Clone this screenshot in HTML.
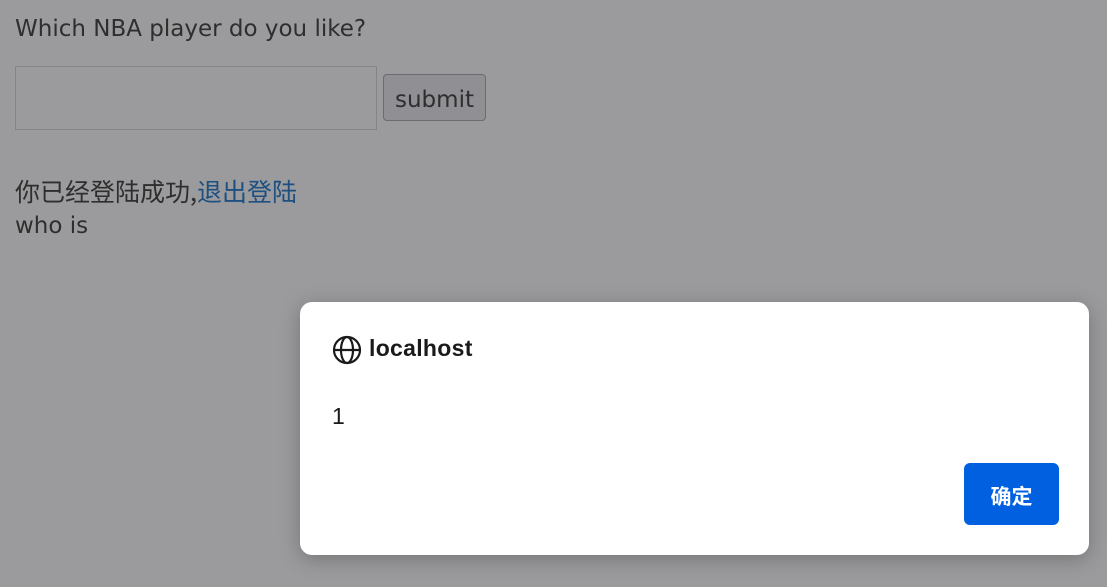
<!DOCTYPE html>
<html><head><meta charset="utf-8"><style>
html,body{margin:0;padding:0;width:1107px;height:587px;overflow:hidden;background:#9b9b9d;font-family:"DejaVu Sans","Noto Sans CJK SC",sans-serif;color:#2e2e2e;}
.t{position:absolute;left:15px;font-size:23px;}
.cjk{font-family:"Noto Sans CJK SC",sans-serif;font-size:25px;}
.inp{position:absolute;left:15px;top:66px;width:362px;height:64px;border:1px solid #858587;box-sizing:border-box;}
.btn{position:absolute;left:383px;top:74px;width:103px;height:47px;border:1px solid #6c6c70;border-radius:4px;background:#8f8f94;box-sizing:border-box;font-size:23px;text-align:center;line-height:50px;}
.dlg{position:absolute;left:300px;top:302px;width:789px;height:253px;background:#fff;border-radius:12px;box-shadow:0 4px 20px rgba(0,0,0,.25);font-family:"Liberation Sans",sans-serif;}
.title{position:absolute;left:69px;top:33px;font-size:23px;font-weight:bold;color:#1a1a1a;letter-spacing:0.3px;}
.msg{position:absolute;left:32px;top:101px;font-size:23px;color:#1a1a1a;}
.ok{position:absolute;left:664px;top:161px;width:95px;height:62px;background:#0060df;border-radius:6px;color:#fff;font-weight:bold;font-size:21px;text-align:center;line-height:66px;font-family:"Noto Sans CJK SC",sans-serif;}
</style></head><body>
<div class="t" style="top:16px">Which NBA player do you like?</div>
<div class="inp"></div>
<div class="btn">submit</div>
<div class="t cjk" style="top:173px">你已经登陆成功,<span style="color:#1d4f80">退出登陆</span></div>
<div class="t" style="top:213px">who is</div>
<div class="dlg">
<svg style="position:absolute;left:32px;top:33px" width="30" height="30" viewBox="0 0 30 30" fill="none" stroke="#1a1a1a" stroke-width="2.2"><circle cx="15" cy="15" r="13"/><ellipse cx="15" cy="15" rx="6" ry="13"/><line x1="2" y1="15" x2="28" y2="15"/></svg>
<div class="title">localhost</div>
<div class="msg">1</div>
<div class="ok">确定</div>
</div>
</body></html>
